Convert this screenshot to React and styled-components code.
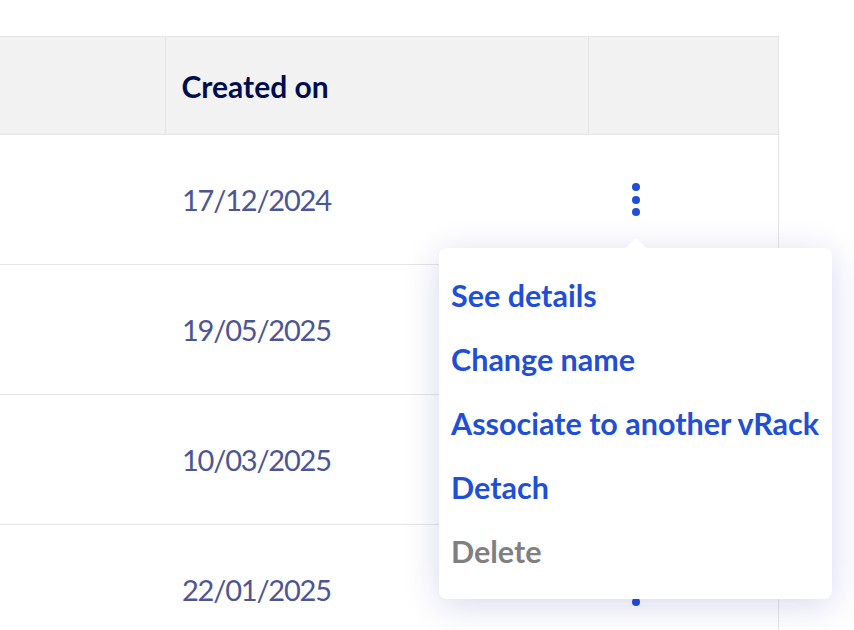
import React from 'react'
import styled, { createGlobalStyle } from 'styled-components'

const GlobalStyle = createGlobalStyle`
  html, body {
    margin: 0;
    padding: 0;
    background: #fff;
    overflow: hidden;
  }
  body {
    font-family: Lato, "Open Sans", sans-serif;
  }
`

const Page = styled.div`
  width: 854px;
  height: 630px;
  padding-top: 36px;
  box-sizing: border-box;
  overflow: hidden;
`

const Table = styled.table`
  margin-left: -201px;
  border-collapse: collapse;
  table-layout: fixed;
  width: 979px;
  border-top: 1px solid #e5e5e5;
  border-right: 1px solid #e5e5e5;
`

const HeadCell = styled.th`
  height: 98px;
  padding: 0 16px;
  background: #f2f2f2;
  border-right: 1px solid #e5e5e5;
  border-bottom: 1px solid #e5e5e5;
  text-align: left;
  font-size: 30px;
  font-weight: 700;
  color: #000e4f;
  width: ${(p) => p.$w}px;
  box-sizing: border-box;

  &:last-child {
    border-right: none;
  }
`

const Row = styled.tr`
  border-bottom: 1px solid #e5e5e5;
`

const Cell = styled.td`
  height: 129px;
  padding: 0 16px 0 17px;
  font-size: 29px;
  letter-spacing: -1.2px;
  color: #4d5592;
  vertical-align: middle;
`

const ActionCell = styled.td`
  position: relative;
  padding: 0 0 0 41px;
  vertical-align: middle;
`

const Kebab = styled.button`
  display: flex;
  flex-direction: column;
  align-items: center;
  gap: 4.5px;
  padding: 0;
  border: none;
  background: none;
  width: 14px;
  cursor: pointer;
`

const Dot = styled.span`
  width: 8px;
  height: 8px;
  border-radius: 50%;
  background: #1f4fd6;
`

const Menu = styled.div`
  position: absolute;
  top: 113px;
  left: -149px;
  width: 393px;
  padding: 15px 0 16px;
  box-sizing: border-box;
  background: #fff;
  border-radius: 8px;
  box-shadow: 0 6px 36px rgba(0, 14, 156, 0.16);
  z-index: 2;

  &::before {
    content: '';
    position: absolute;
    top: -7px;
    left: 189px;
    width: 16px;
    height: 16px;
    background: #fff;
    transform: rotate(45deg);
  }
`

const MenuItem = styled.button`
  position: relative;
  display: block;
  width: 100%;
  height: 64px;
  padding: 0 12px;
  border: none;
  background: none;
  text-align: left;
  font-family: inherit;
  font-size: 30.5px;
  font-weight: 700;
  white-space: nowrap;
  color: ${(p) => (p.$disabled ? '#808080' : '#1f4fd6')};
  cursor: ${(p) => (p.$disabled ? 'default' : 'pointer')};
`

const rows = ['17/12/2024', '19/05/2025', '10/03/2025', '22/01/2025']
const actions = ['See details', 'Change name', 'Associate to another vRack', 'Detach']

const KebabButton = () => (
  <Kebab aria-label="Actions">
    <Dot />
    <Dot />
    <Dot />
  </Kebab>
)

export default function App() {
  return (
    <>
      <GlobalStyle />
      <Page>
        <Table>
          <thead>
            <tr>
              <HeadCell $w={366} />
              <HeadCell $w={423}>Created on</HeadCell>
              <HeadCell $w={190} />
            </tr>
          </thead>
          <tbody>
            {rows.map((date, i) => (
              <Row key={date}>
                <Cell />
                <Cell>{date}</Cell>
                <ActionCell>
                  <KebabButton />
                  {i === 0 && (
                    <Menu role="menu">
                      {actions.map((a) => (
                        <MenuItem key={a}>{a}</MenuItem>
                      ))}
                      <MenuItem $disabled>Delete</MenuItem>
                    </Menu>
                  )}
                </ActionCell>
              </Row>
            ))}
          </tbody>
        </Table>
      </Page>
    </>
  )
}
